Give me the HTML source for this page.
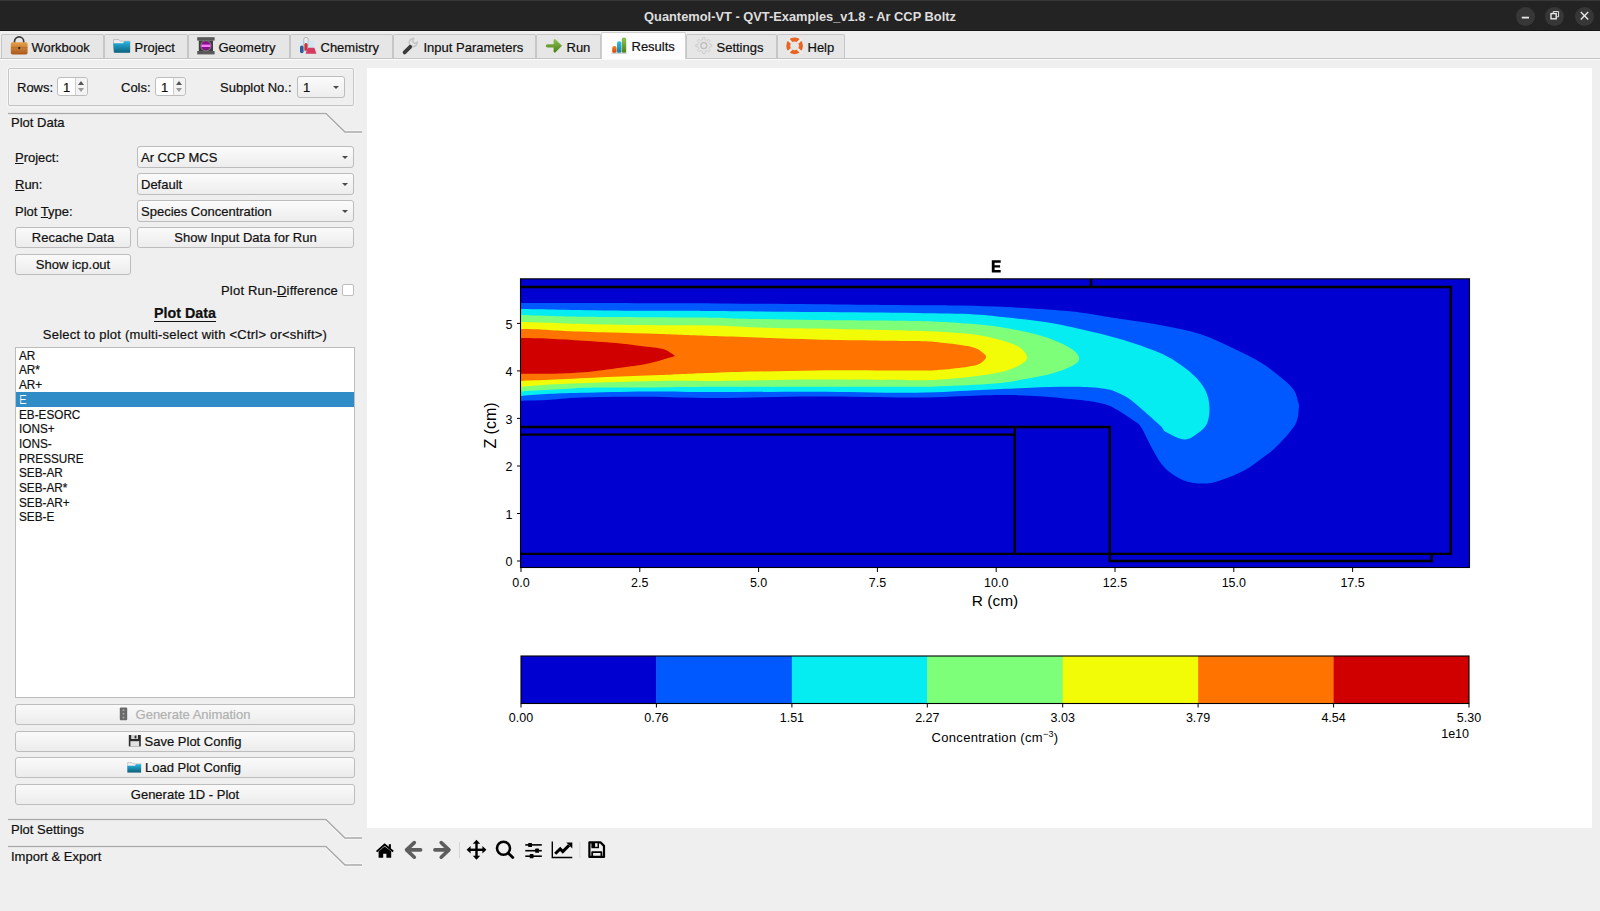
<!DOCTYPE html>
<html><head><meta charset="utf-8">
<style>
*{margin:0;padding:0;box-sizing:border-box}
html,body{width:1600px;height:911px;overflow:hidden;background:#efefef;font-family:"Liberation Sans",sans-serif;font-size:13px;color:#101010;-webkit-text-stroke:0.2px #101010}
.abs{position:absolute}
#title{left:0;top:0;width:1600px;height:31px;background:#232323;border-top:1px solid #383838}
#title .t{-webkit-text-stroke:0;position:absolute;left:0;width:1600px;top:7.5px;text-align:center;color:#dedede;font-weight:bold;font-size:12.85px}
.wb{position:absolute;top:6px;width:19px;height:19px;border-radius:50%;background:#373737}
.tab{position:absolute;top:34px;height:24px;background:#e6e6e6;border:1px solid #c6c6c6;border-bottom:none;border-radius:2px 2px 0 0;white-space:nowrap}
.tab span{position:absolute;top:5px}
.tab svg{position:absolute;top:4px}
.tab.sel{top:32px;height:27px;background:#fcfcfc;border-color:#cfcfcf}
.tab.sel span{top:6px}
.lbl{position:absolute;white-space:nowrap}
.combo{position:absolute;height:22px;background:linear-gradient(#fbfbfb,#ededed);border:1px solid #bcbcbc;border-radius:3px;white-space:nowrap}
.combo span{position:absolute;left:3px;top:3px}
.combo i{position:absolute;right:5.5px;top:8.5px;width:0;height:0;border-left:3.5px solid transparent;border-right:3.5px solid transparent;border-top:3.8px solid #4a4a4a}
.btn{position:absolute;height:21px;background:linear-gradient(#fafafa,#ececec);border:1px solid #bdbdbd;border-radius:3px;text-align:center;white-space:nowrap}
.btn span{position:relative;top:2px}
.btn.dis{color:#b0b0b0;-webkit-text-stroke:0.2px #b0b0b0}
.spin{position:absolute;width:31px;height:19px;background:#fff;border:1px solid #bdbdbd;border-radius:3px}
.spin span{position:absolute;left:5px;top:2px}
.spin .sb{position:absolute;right:0;top:0;width:12px;height:17px;border-left:1px solid #cfcfcf;background:#f3f3f3;border-radius:0 3px 3px 0}
.spin .up{position:absolute;left:2px;top:3px;border-left:3.5px solid transparent;border-right:3.5px solid transparent;border-bottom:4px solid #555}
.spin .dn{position:absolute;left:2px;top:10px;border-left:3.5px solid transparent;border-right:3.5px solid transparent;border-top:4px solid #999}
.li{position:absolute;left:19px;white-space:nowrap;font-size:13.5px;transform:scaleX(0.87);transform-origin:0 0}
</style></head><body>
<div id="title" class="abs"><div class="abs" style="left:0;top:29px;width:1600px;height:1px;background:#161616"></div><div class="t">Quantemol-VT - QVT-Examples_v1.8 - Ar CCP Boltz</div>
<div class="wb" style="left:1516px"></div><div class="wb" style="left:1545px"></div><div class="wb" style="left:1575px"></div>
</div>
<div class="abs" style="left:0;top:58px;width:1600px;height:1px;background:#c4c4c4"></div><div class="abs" style="left:0;top:59px;width:1600px;height:1px;background:#fafafa"></div>
<div class="tab" style="left:1px;width:103px"><span style="left:29.5px">Workbook</span></div>
<div class="tab" style="left:104px;width:84px"><span style="left:29.5px">Project</span></div>
<div class="tab" style="left:188px;width:102px"><span style="left:29.5px">Geometry</span></div>
<div class="tab" style="left:290px;width:103px"><span style="left:29.5px">Chemistry</span></div>
<div class="tab" style="left:393px;width:143px"><span style="left:29.5px">Input Parameters</span></div>
<div class="tab" style="left:536px;width:65px"><span style="left:29.5px">Run</span></div>
<div class="tab sel" style="left:601px;width:85px"><span style="left:29.5px">Results</span></div>
<div class="tab" style="left:686px;width:91px"><span style="left:29.5px">Settings</span></div>
<div class="tab" style="left:777px;width:68px"><span style="left:29.5px">Help</span></div>
<div class="abs" style="left:367px;top:68px;width:1225px;height:760px;background:#fff"></div>

<!-- left panel -->
<div class="abs" style="left:7px;top:67px;width:348px;height:41px;border:1px solid #f6f6f6;border-radius:3px"></div><div class="abs" style="left:8px;top:68px;width:346px;height:38px;border:1px solid #c6c6c6;border-radius:2px;box-shadow:inset 1px 1px 0 #f8f8f8"></div>
<div class="lbl" style="left:17px;top:80px">Rows:</div>
<div class="spin" style="left:57px;top:77px"><span>1</span><div class="sb"><i class="up"></i><i class="dn"></i></div></div>
<div class="lbl" style="left:121px;top:80px">Cols:</div>
<div class="spin" style="left:155px;top:77px"><span>1</span><div class="sb"><i class="up"></i><i class="dn"></i></div></div>
<div class="lbl" style="left:220px;top:80px">Subplot No.:</div>
<div class="combo" style="left:297px;top:76px;width:48px;height:22px"><span style="left:5px">1</span><i></i></div>

<svg class="abs" style="left:0;top:0" width="370" height="911">
<g fill="none" stroke="#fbfbfb" stroke-width="1">
<polyline points="8,112.5 326.5,112.5 345.5,131 362,131"/><polyline points="8,114.5 325.5,114.5 344.5,133 362,133"/>
<polyline points="8,818.5 326.5,818.5 345.5,837 362,837"/><polyline points="8,820.5 325.5,820.5 344.5,839 362,839"/>
<polyline points="8,845.5 326.5,845.5 345.5,864 362,864"/><polyline points="8,847.5 325.5,847.5 344.5,866 362,866"/>
</g>
<g fill="none" stroke="#a9a9a9" stroke-width="1.5">
<polyline points="8,113.5 326,113.5 345,132 362,132"/>
<polyline points="8,819.5 326,819.5 345,838 362,838"/>
<polyline points="8,846.5 326,846.5 345,865 362,865"/>
</g>
</svg>
<div class="lbl" style="left:11px;top:115px">Plot Data</div>
<div class="lbl" style="left:11px;top:822px">Plot Settings</div>
<div class="lbl" style="left:11px;top:849px">Import &amp; Export</div>

<div class="lbl" style="left:15px;top:150px"><u>P</u>roject:</div>
<div class="combo" style="left:137px;top:146px;width:217px"><span>Ar CCP MCS</span><i></i></div>
<div class="lbl" style="left:15px;top:177px"><u>R</u>un:</div>
<div class="combo" style="left:137px;top:173px;width:217px"><span>Default</span><i></i></div>
<div class="lbl" style="left:15px;top:204px">Plot <u>T</u>ype:</div>
<div class="combo" style="left:137px;top:200px;width:217px"><span>Species Concentration</span><i></i></div>
<div class="btn" style="left:15px;top:227px;width:116px"><span>Recache Data</span></div>
<div class="btn" style="left:137px;top:227px;width:217px"><span>Show Input Data for Run</span></div>
<div class="btn" style="left:15px;top:254px;width:116px"><span>Show icp.out</span></div>
<div class="lbl" style="left:221px;top:283px;letter-spacing:0.2px">Plot Run-<u>D</u>ifference</div>
<div class="abs" style="left:342px;top:284px;width:12px;height:12px;background:#fff;border:1px solid #bdbdbd;border-radius:2px"></div>
<div class="lbl" style="left:0;width:370px;text-align:center;top:305px;font-weight:bold;font-size:14.3px"><u style="text-underline-offset:2.5px">Plot Data</u></div>
<div class="lbl" style="left:0;width:370px;text-align:center;top:327px;letter-spacing:0.22px">Select to plot (multi-select with &lt;Ctrl&gt; or&lt;shift&gt;)</div>

<div class="abs" style="left:15px;top:347px;width:340px;height:351px;background:#fff;border:1px solid #bcbcbc"></div>
<div class="abs" style="left:16px;top:392px;width:338px;height:14.5px;background:#308cc6"></div>
<div class="list">
<div class="li" style="top:347.80px">AR</div>
<div class="li" style="top:362.48px">AR*</div>
<div class="li" style="top:377.16px">AR+</div>
<div class="li" style="color:#fff;top:391.84px">E</div>
<div class="li" style="top:406.52px">EB-ESORC</div>
<div class="li" style="top:421.20px">IONS+</div>
<div class="li" style="top:435.88px">IONS-</div>
<div class="li" style="top:450.56px">PRESSURE</div>
<div class="li" style="top:465.24px">SEB-AR</div>
<div class="li" style="top:479.92px">SEB-AR*</div>
<div class="li" style="top:494.60px">SEB-AR+</div>
<div class="li" style="top:509.28px">SEB-E</div>
</div>
<div class="btn dis" style="left:15px;top:704px;width:340px"><span style="left:8px">Generate Animation</span></div>
<div class="btn" style="left:15px;top:731px;width:340px"><span style="left:8px">Save Plot Config</span></div>
<div class="btn" style="left:15px;top:757px;width:340px"><span style="left:8px">Load Plot Config</span></div>
<div class="btn" style="left:15px;top:784px;width:340px"><span>Generate 1D - Plot</span></div>
<svg class="abs" style="left:0;top:0" width="1600" height="911" font-family="Liberation Sans" >
<rect x="521" y="279" width="948" height="288" fill="#0000d1"/>
<path fill="#0059ff" d="M521.00,302.90 C530.83,302.92 547.67,302.92 580.00,303.00 C612.33,303.08 675.83,303.20 715.00,303.40 C754.17,303.60 781.67,303.90 815.00,304.20 C848.33,304.50 890.67,304.98 915.00,305.20 C939.33,305.42 945.67,305.18 961.00,305.50 C976.33,305.82 992.67,306.42 1007.00,307.10 C1021.33,307.78 1034.83,308.70 1047.00,309.60 C1059.17,310.50 1067.83,310.97 1080.00,312.50 C1092.17,314.03 1106.67,316.72 1120.00,318.80 C1133.33,320.88 1146.67,322.47 1160.00,325.00 C1173.33,327.53 1187.73,330.08 1200.00,334.00 C1212.27,337.92 1223.62,343.83 1233.60,348.50 C1243.58,353.17 1252.22,357.33 1259.90,362.00 C1267.58,366.67 1274.10,371.92 1279.70,376.50 C1285.30,381.08 1290.43,385.25 1293.50,389.50 C1296.57,393.75 1297.22,398.92 1298.10,402.00 C1298.98,405.08 1299.27,404.27 1298.80,408.00 C1298.33,411.73 1298.77,418.23 1295.30,424.40 C1291.83,430.57 1283.05,439.73 1278.00,445.00 C1272.95,450.27 1270.50,451.83 1265.00,456.00 C1259.50,460.17 1252.50,465.92 1245.00,470.00 C1237.50,474.08 1227.00,478.23 1220.00,480.50 C1213.00,482.77 1209.00,483.60 1203.00,483.60 C1197.00,483.60 1190.33,483.10 1184.00,480.50 C1177.67,477.90 1170.17,473.08 1165.00,468.00 C1159.83,462.92 1156.95,456.75 1153.00,450.00 C1149.05,443.25 1144.40,432.33 1141.30,427.50 C1138.20,422.67 1138.98,424.27 1134.40,421.00 C1129.82,417.73 1119.53,410.88 1113.80,407.90 C1108.07,404.92 1104.58,404.30 1100.00,403.10 C1095.42,401.90 1095.17,401.77 1086.30,400.70 C1077.43,399.63 1058.88,397.63 1046.80,396.70 C1034.72,395.77 1024.78,395.32 1013.80,395.10 C1002.82,394.88 997.37,395.02 980.90,395.40 C964.43,395.78 942.65,397.22 915.00,397.40 C887.35,397.58 848.33,396.40 815.00,396.50 C781.67,396.60 743.03,397.97 715.00,398.00 C686.97,398.03 669.15,396.80 646.80,396.70 C624.45,396.60 597.60,396.85 580.90,397.40 C564.20,397.95 556.58,399.45 546.60,400.00 C536.62,400.55 525.27,400.58 521.00,400.70 L521.00,302.90Z"/>
<path fill="#06edf1" d="M521.00,309.10 C525.50,309.17 534.33,309.28 548.00,309.50 C561.67,309.72 580.00,310.18 603.00,310.40 C626.00,310.62 667.33,310.68 686.00,310.80 C704.67,310.92 693.50,310.88 715.00,311.10 C736.50,311.32 781.67,311.77 815.00,312.10 C848.33,312.43 888.45,312.72 915.00,313.10 C941.55,313.48 958.93,313.67 974.30,314.40 C989.67,315.13 995.12,316.20 1007.20,317.50 C1019.28,318.80 1034.67,320.28 1046.80,322.20 C1058.93,324.12 1067.80,326.20 1080.00,329.00 C1092.20,331.80 1106.67,335.00 1120.00,339.00 C1133.33,343.00 1149.85,348.65 1160.00,353.00 C1170.15,357.35 1174.78,360.88 1180.90,365.10 C1187.02,369.32 1192.53,373.92 1196.70,378.30 C1200.87,382.68 1203.78,386.70 1205.90,391.40 C1208.02,396.10 1209.17,401.23 1209.40,406.50 C1209.63,411.77 1209.20,418.58 1207.30,423.00 C1205.40,427.42 1201.80,430.25 1198.00,433.00 C1194.20,435.75 1189.83,439.67 1184.50,439.50 C1179.17,439.33 1170.00,434.28 1166.00,432.00 C1162.00,429.72 1164.38,429.47 1160.50,425.80 C1156.62,422.13 1148.08,414.63 1142.70,410.00 C1137.32,405.37 1132.82,401.10 1128.20,398.00 C1123.58,394.90 1118.70,392.88 1115.00,391.40 C1111.30,389.92 1109.68,389.75 1106.00,389.10 C1102.32,388.45 1100.58,387.88 1092.90,387.50 C1085.22,387.12 1071.98,386.68 1059.90,386.80 C1047.82,386.92 1033.57,387.65 1020.40,388.20 C1007.23,388.75 998.47,389.33 980.90,390.10 C963.33,390.87 942.65,392.53 915.00,392.80 C887.35,393.07 848.33,391.82 815.00,391.70 C781.67,391.58 743.03,392.15 715.00,392.10 C686.97,392.05 669.15,391.28 646.80,391.40 C624.45,391.52 597.60,392.35 580.90,392.80 C564.20,393.25 556.58,393.57 546.60,394.10 C536.62,394.63 525.27,395.68 521.00,396.00 L521.00,309.10Z"/>
<path fill="#7dff7a" d="M521.00,315.00 C529.00,315.25 553.67,316.17 569.00,316.50 C584.33,316.83 588.67,316.80 613.00,317.00 C637.33,317.20 695.00,317.45 715.00,317.70 C735.00,317.95 716.33,318.12 733.00,318.50 C749.67,318.88 784.67,319.58 815.00,320.00 C845.33,320.42 889.55,320.40 915.00,321.00 C940.45,321.60 952.33,322.40 967.70,323.60 C983.07,324.80 995.12,326.22 1007.20,328.20 C1019.28,330.18 1031.42,333.08 1040.20,335.50 C1048.98,337.92 1054.42,340.28 1059.90,342.70 C1065.38,345.12 1069.92,347.58 1073.10,350.00 C1076.28,352.42 1078.57,354.90 1079.00,357.20 C1079.43,359.50 1078.88,361.50 1075.70,363.80 C1072.52,366.10 1066.92,368.70 1059.90,371.00 C1052.88,373.30 1044.58,375.52 1033.60,377.60 C1022.62,379.68 1009.37,382.07 994.00,383.50 C978.63,384.93 954.57,385.65 941.40,386.20 C928.23,386.75 936.07,386.70 915.00,386.80 C893.93,386.90 848.33,386.80 815.00,386.80 C781.67,386.80 743.03,386.68 715.00,386.80 C686.97,386.92 666.97,387.38 646.80,387.50 C626.63,387.62 609.38,387.17 594.00,387.50 C578.62,387.83 566.67,388.85 554.50,389.50 C542.33,390.15 526.58,391.08 521.00,391.40 L521.00,315.00Z"/>
<path fill="#f1fc06" d="M521.00,322.00 C524.33,322.08 530.33,322.17 541.00,322.50 C551.67,322.83 568.50,323.58 585.00,324.00 C601.50,324.42 618.33,324.73 640.00,325.00 C661.67,325.27 695.50,325.18 715.00,325.60 C734.50,326.02 740.33,327.02 757.00,327.50 C773.67,327.98 788.67,327.95 815.00,328.50 C841.33,329.05 891.75,330.08 915.00,330.80 C938.25,331.52 943.52,332.02 954.50,332.80 C965.48,333.58 972.12,333.97 980.90,335.50 C989.68,337.03 1000.62,339.92 1007.20,342.00 C1013.78,344.08 1017.10,345.58 1020.40,348.00 C1023.70,350.42 1026.57,353.98 1027.00,356.50 C1027.43,359.02 1026.30,360.78 1023.00,363.10 C1019.70,365.42 1014.22,368.32 1007.20,370.40 C1000.18,372.48 990.78,374.18 980.90,375.60 C971.02,377.02 958.88,378.13 947.90,378.90 C936.92,379.67 937.15,380.08 915.00,380.20 C892.85,380.32 848.33,379.48 815.00,379.60 C781.67,379.72 740.83,380.68 715.00,380.90 C689.17,381.12 677.97,380.68 660.00,380.90 C642.03,381.12 624.78,381.65 607.20,382.20 C589.62,382.75 568.87,383.43 554.50,384.20 C540.13,384.97 526.58,386.37 521.00,386.80 L521.00,322.00Z"/>
<path fill="#ff7300" d="M521.00,329.10 C524.33,329.17 533.67,329.18 541.00,329.50 C548.33,329.82 553.50,330.50 565.00,331.00 C576.50,331.50 594.17,332.00 610.00,332.50 C625.83,333.00 642.50,333.40 660.00,334.00 C677.50,334.60 689.17,335.20 715.00,336.10 C740.83,337.00 781.67,338.57 815.00,339.40 C848.33,340.23 893.93,340.55 915.00,341.10 C936.07,341.65 932.62,341.88 941.40,342.70 C950.18,343.52 961.57,344.90 967.70,346.00 C973.83,347.10 976.45,348.75 978.20,349.30 C979.52,350.50 985.87,354.08 986.10,356.50 C986.33,358.92 982.67,362.10 979.60,363.80 C976.53,365.50 974.07,365.72 967.70,366.70 C961.33,367.68 950.18,369.05 941.40,369.70 C932.62,370.35 936.07,370.48 915.00,370.60 C893.93,370.72 848.33,370.05 815.00,370.40 C781.67,370.75 740.83,371.93 715.00,372.70 C689.17,373.47 677.97,374.28 660.00,375.00 C642.03,375.72 624.78,376.23 607.20,377.00 C589.62,377.77 568.87,378.95 554.50,379.60 C540.13,380.25 526.58,380.68 521.00,380.90 L521.00,329.10Z"/>
<path fill="#d10000" d="M521.00,338.10 C525.82,338.20 539.48,338.27 549.90,338.70 C560.32,339.13 571.75,339.92 583.50,340.70 C595.25,341.48 609.85,342.40 620.40,343.40 C630.95,344.40 639.55,345.72 646.80,346.70 C654.05,347.68 659.20,347.77 663.90,349.30 C668.60,350.83 673.15,354.80 675.00,355.90 C670.30,357.22 655.90,361.83 646.80,363.80 C637.70,365.77 630.95,366.28 620.40,367.70 C609.85,369.12 594.48,371.30 583.50,372.30 C572.52,373.30 564.92,373.47 554.50,373.70 C544.08,373.93 526.58,373.70 521.00,373.70 L521.00,338.10Z"/>
<g fill="none" stroke="#000" stroke-width="2.4" stroke-linejoin="miter">
<polyline points="521,287 1450.8,287 1450.8,553.9 521,553.9"/>
<polyline points="1091,279 1091,287"/>
<polyline points="521,427 1109.8,427 1109.8,561 1431.7,561 1431.7,553.9"/>
<polyline points="521,434.6 1014.8,434.6"/><polyline points="1014.8,427 1014.8,553.9"/>
</g>
<rect x="520.5" y="278.8" width="949" height="288.7" fill="none" stroke="#000" stroke-width="1.1"/>
<g stroke="#000" stroke-width="1"><line x1="517" y1="561.0" x2="521" y2="561.0"/><line x1="517" y1="513.5" x2="521" y2="513.5"/><line x1="517" y1="466.0" x2="521" y2="466.0"/><line x1="517" y1="418.4" x2="521" y2="418.4"/><line x1="517" y1="370.9" x2="521" y2="370.9"/><line x1="517" y1="323.4" x2="521" y2="323.4"/><line x1="521.0" y1="567.5" x2="521.0" y2="572"/><line x1="639.8" y1="567.5" x2="639.8" y2="572"/><line x1="758.6" y1="567.5" x2="758.6" y2="572"/><line x1="877.4" y1="567.5" x2="877.4" y2="572"/><line x1="996.2" y1="567.5" x2="996.2" y2="572"/><line x1="1115.0" y1="567.5" x2="1115.0" y2="572"/><line x1="1233.8" y1="567.5" x2="1233.8" y2="572"/><line x1="1352.6" y1="567.5" x2="1352.6" y2="572"/></g>
<g font-size="12.5" fill="#000"><text x="512.5" y="566.2" text-anchor="end">0</text><text x="512.5" y="518.7" text-anchor="end">1</text><text x="512.5" y="471.2" text-anchor="end">2</text><text x="512.5" y="423.6" text-anchor="end">3</text><text x="512.5" y="376.1" text-anchor="end">4</text><text x="512.5" y="328.6" text-anchor="end">5</text><text x="521.0" y="586.5" text-anchor="middle">0.0</text><text x="639.8" y="586.5" text-anchor="middle">2.5</text><text x="758.6" y="586.5" text-anchor="middle">5.0</text><text x="877.4" y="586.5" text-anchor="middle">7.5</text><text x="996.2" y="586.5" text-anchor="middle">10.0</text><text x="1115.0" y="586.5" text-anchor="middle">12.5</text><text x="1233.8" y="586.5" text-anchor="middle">15.0</text><text x="1352.6" y="586.5" text-anchor="middle">17.5</text></g>
<text x="995" y="601+0" font-size="14" text-anchor="middle" fill="#000" transform="translate(0,0)"></text>
<text x="995" y="606.4" font-size="15.5" text-anchor="middle" fill="#000">R (cm)</text>
<text x="0" y="0" font-size="16" text-anchor="middle" fill="#000" transform="translate(495.8,425.5) rotate(-90)">Z (cm)</text>
<path fill="#000" d="M991.8,260.2 h8.9 v2.6 h-6.1 v2.4 h5.5 v2.4 h-5.5 v2.4 h6.1 v2.6 h-8.9z"/>
<rect x="521.00" y="656" width="135.73" height="47.5" fill="#0000d1"/>
<rect x="656.43" y="656" width="135.73" height="47.5" fill="#0059ff"/>
<rect x="791.86" y="656" width="135.73" height="47.5" fill="#06edf1"/>
<rect x="927.29" y="656" width="135.73" height="47.5" fill="#7dff7a"/>
<rect x="1062.71" y="656" width="135.73" height="47.5" fill="#f1fc06"/>
<rect x="1198.14" y="656" width="135.73" height="47.5" fill="#ff7300"/>
<rect x="1333.57" y="656" width="135.43" height="47.5" fill="#d10000"/>
<rect x="521" y="656" width="948" height="47.5" fill="none" stroke="#000" stroke-width="1.1"/>
<g stroke="#000" stroke-width="1"><line x1="521.0" y1="703.5" x2="521.0" y2="707.5"/><line x1="656.4" y1="703.5" x2="656.4" y2="707.5"/><line x1="791.9" y1="703.5" x2="791.9" y2="707.5"/><line x1="927.3" y1="703.5" x2="927.3" y2="707.5"/><line x1="1062.7" y1="703.5" x2="1062.7" y2="707.5"/><line x1="1198.1" y1="703.5" x2="1198.1" y2="707.5"/><line x1="1333.6" y1="703.5" x2="1333.6" y2="707.5"/><line x1="1469.0" y1="703.5" x2="1469.0" y2="707.5"/></g>
<g font-size="12.5" fill="#000"><text x="521.0" y="722" text-anchor="middle">0.00</text><text x="656.4" y="722" text-anchor="middle">0.76</text><text x="791.9" y="722" text-anchor="middle">1.51</text><text x="927.3" y="722" text-anchor="middle">2.27</text><text x="1062.7" y="722" text-anchor="middle">3.03</text><text x="1198.1" y="722" text-anchor="middle">3.79</text><text x="1333.6" y="722" text-anchor="middle">4.54</text><text x="1469.0" y="722" text-anchor="middle">5.30</text></g>
<text x="995" y="742" font-size="13" letter-spacing="0.3" text-anchor="middle" fill="#000">Concentration (cm<tspan dy="-5" font-size="9">−3</tspan><tspan dy="5">)</tspan></text>
<text x="1469" y="738" font-size="12.5" text-anchor="end" fill="#000">1e10</text>
</svg><svg class="abs" style="left:0;top:0" width="1600" height="911">
<defs>
<linearGradient id="gBrief" x1="0" y1="0" x2="0" y2="1"><stop offset="0" stop-color="#e9a24a"/><stop offset="1" stop-color="#a9581c"/></linearGradient>
<linearGradient id="gFold" x1="0" y1="0" x2="0" y2="1"><stop offset="0" stop-color="#27b6e3"/><stop offset="1" stop-color="#0c5f7c"/></linearGradient>
<linearGradient id="gGreen" x1="0" y1="0" x2="0" y2="1"><stop offset="0" stop-color="#8cc152"/><stop offset="1" stop-color="#4a8012"/></linearGradient>
<linearGradient id="gOr" x1="0" y1="0" x2="0" y2="1"><stop offset="0" stop-color="#f5841f"/><stop offset="1" stop-color="#d43d0a"/></linearGradient>
<linearGradient id="gBl" x1="0" y1="0" x2="0" y2="1"><stop offset="0" stop-color="#2fc0ea"/><stop offset="1" stop-color="#127ca4"/></linearGradient>
<linearGradient id="gGr2" x1="0" y1="0" x2="0" y2="1"><stop offset="0" stop-color="#8ec652"/><stop offset="1" stop-color="#4b7f14"/></linearGradient>
</defs>
<!-- window buttons -->
<g stroke="#e8e8e8" fill="none" stroke-width="1.4">
<line x1="1521.8" y1="17.6" x2="1529" y2="17.6" stroke-width="1.8"/>
<rect x="1551" y="13.6" width="5.2" height="5.2" stroke-width="1.4"/>
<polyline points="1553.2,13.6 1553.2,11.6 1558.6,11.6 1558.6,16.8 1556.2,16.8" stroke-width="1"/>
<line x1="1580.8" y1="12" x2="1588.2" y2="19.4"/><line x1="1588.2" y1="12" x2="1580.8" y2="19.4"/>
</g>
<!-- briefcase -->
<path d="M14.5,43 v-1.5 a4.6,4.6 0 0 1 9.2,0 v1.5" fill="none" stroke="#3a3a3a" stroke-width="1.7"/>
<rect x="10.8" y="42.2" width="16.8" height="12.2" rx="1.6" fill="url(#gBrief)"/>
<line x1="11" y1="47.6" x2="27.4" y2="47.6" stroke="#b86a26" stroke-width="0.8"/>
<circle cx="19.2" cy="48" r="1.2" fill="#333"/>
<!-- folder project -->
<path d="M113.6,52 v-12.4 h5.4 l1.4,1.6 h9.6 v10.8z" fill="#efefef" stroke="#b9b9b9" stroke-width="0.9"/>
<path d="M114.2,52.8 h15.8 v-10.6 a1,1 0 0 0 -1,-1 h-4.6 l-1.4,2.1 h-8.8 a1,1 0 0 0 -1,1z" fill="url(#gFold)"/>
<!-- geometry -->
<rect x="197.2" y="37.2" width="17.4" height="3.4" fill="#585858"/>
<rect x="197.2" y="51" width="17.4" height="3.4" fill="#585858"/>
<rect x="198.8" y="40.6" width="14.2" height="10.4" fill="#3c3c3c"/>
<circle cx="205.9" cy="45.8" r="5.6" fill="#777" />
<circle cx="205.9" cy="45.8" r="4.6" fill="#8a108a"/>
<rect x="201.4" y="44.6" width="9" height="2.4" fill="#ff7bff"/>
<!-- chemistry -->
<rect x="299.6" y="40.5" width="4.6" height="12.8" rx="2" fill="#d6ecf8"/>
<rect x="300.0" y="45.5" width="3.6" height="7.8" rx="1.8" fill="#2b5c9e"/>
<rect x="303.8" y="37.4" width="4.4" height="13.6" rx="2" fill="#e6f2f8" stroke="#9a7070" stroke-width="0.5"/>
<rect x="304.4" y="43" width="3.2" height="7.8" rx="1.6" fill="#c93434"/>
<path d="M308.6,41 h5 v5 l2.8,7.8 h-10.8 l3,-7.8z" fill="#cfe7f5"/>
<path d="M307.8,47.8 h6.6 l2,6 h-10.8z" fill="#d63a62"/>
<!-- wrench -->
<path d="M413.6,38.6 a4,4 0 1 0 3.6,3.6 l-2.6,1.4 -2,-2z" fill="none" stroke="#c6c6c6" stroke-width="1.6"/>
<line x1="404.6" y1="52.4" x2="410.2" y2="46.8" stroke="#3a3a3a" stroke-width="3.8" stroke-linecap="round"/>
<!-- run arrow -->
<path d="M547.4,44.2 h6.2 v-4 a1.2,1.2 0 0 1 2,-0.8 l6.4,6.4 l-6.4,6.4 a1.2,1.2 0 0 1 -2,-0.8 v-4 h-6.2 a1.6,1.6 0 0 1 0,-3.2z" fill="url(#gGreen)"/>
<!-- results bars -->
<rect x="612.2" y="46" width="4.4" height="7.4" rx="2" fill="url(#gOr)"/>
<rect x="617" y="41.2" width="4.4" height="12.2" rx="2" fill="url(#gBl)"/>
<rect x="621.8" y="37.4" width="4.4" height="16" rx="2" fill="url(#gGr2)"/>
<rect x="611.4" y="52.6" width="15.4" height="1.4" fill="#cfd3d6"/>
<!-- gear -->
<g transform="translate(703.8,45.6)">
<path id="gearp" d="M-2.29,-5.55 L-1.31,-5.86 L-1.06,-7.93 L1.06,-7.93 L1.31,-5.86 L2.30,-5.54 L3.21,-5.07 L4.85,-6.36 L6.36,-4.85 L5.07,-3.21 L5.55,-2.29 L5.86,-1.31 L7.93,-1.06 L7.93,1.06 L5.86,1.31 L5.54,2.30 L5.07,3.21 L6.36,4.85 L4.85,6.36 L3.21,5.07 L2.29,5.55 L1.31,5.86 L1.06,7.93 L-1.06,7.93 L-1.31,5.86 L-2.30,5.54 L-3.21,5.07 L-4.85,6.36 L-6.36,4.85 L-5.07,3.21 L-5.55,2.29 L-5.86,1.31 L-7.93,1.06 L-7.93,-1.06 L-5.86,-1.31 L-5.54,-2.30 L-5.07,-3.21 L-6.36,-4.85 L-4.85,-6.36 L-3.21,-5.07Z" fill="#e4e4e4" stroke="#c8c8c8" stroke-width="0.8"/>
<circle r="3" fill="none" stroke="#bdbdbd" stroke-width="1.3"/>
</g>
<!-- lifebuoy -->
<g transform="translate(794.6,45.8)">
<circle r="6.4" fill="none" stroke="#e86420" stroke-width="4"/>
<g stroke="#ececec" stroke-width="2.6"><line x1="-3" y1="-3" x2="-7" y2="-7"/><line x1="3" y1="-3" x2="7" y2="-7"/><line x1="-3" y1="3" x2="-7" y2="7"/><line x1="3" y1="3" x2="7" y2="7"/></g>
</g>
<!-- toolbar -->
<g fill="#000">
<path d="M376.6,851.6 L384.6,844.6 L393.2,851.6" fill="none" stroke="#000" stroke-width="1.9"/>
<rect x="388.8" y="844.2" width="2.1" height="4.2"/>
<path d="M378.6,851.2 L384.6,846.4 L391.2,851.2 V857.8 H386.4 V853.8 H383.2 V857.8 H378.6z"/>
</g>
<g fill="none" stroke="#5e5e5e" stroke-width="3.6" stroke-linecap="round" stroke-linejoin="round">
<polyline points="414.3,842.6 406.6,849.9 414.3,857.2"/><line x1="407" y1="849.9" x2="420.6" y2="849.9"/>
<polyline points="441.2,842.6 448.9,849.9 441.2,857.2"/><line x1="448.5" y1="849.9" x2="434.9" y2="849.9"/>
</g>
<line x1="459.5" y1="842" x2="459.5" y2="858" stroke="#d6d6d6" stroke-width="1"/>
<line x1="579.9" y1="842" x2="579.9" y2="858" stroke="#d6d6d6" stroke-width="1"/>
<g fill="#000">
<rect x="475.3" y="843" width="2.4" height="14"/><rect x="469.5" y="848.6" width="14" height="2.4"/>
<path d="M476.5,839.8 L480.2,843.8 H472.8z M476.5,859.8 L480.2,855.8 H472.8z M466.6,849.8 L470.6,846.1 V853.5z M486.4,849.8 L482.4,846.1 V853.5z"/>
</g>
<circle cx="503.5" cy="848.3" r="6.5" fill="none" stroke="#000" stroke-width="2.6"/>
<line x1="508.6" y1="853.4" x2="512.8" y2="857.6" stroke="#000" stroke-width="2.8" stroke-linecap="round"/>
<g stroke="#000" stroke-width="1.6">
<line x1="525.3" y1="844.9" x2="541.8" y2="844.9"/><line x1="525.3" y1="850.7" x2="541.8" y2="850.7"/><line x1="525.3" y1="856.2" x2="541.8" y2="856.2"/>
</g>
<g fill="#000"><rect x="528.2" y="842.9" width="3.8" height="4.2" rx="0.6"/><rect x="535.2" y="848.6" width="3.8" height="4.2" rx="0.6"/><rect x="529.7" y="854.1" width="3.8" height="4.2" rx="0.6"/></g>
<path d="M552.3,841.5 V857.5 H572.3" fill="none" stroke="#000" stroke-width="1.4"/>
<polyline points="555.2,853.8 560.2,848.9 562.8,851.6 569,845.4" fill="none" stroke="#000" stroke-width="3"/>
<path d="M572.3,842.6 L572.3,848.6 L566.3,842.6z" fill="#000"/>
<g fill="none" stroke="#000" stroke-width="2.2" stroke-linejoin="round">
<path d="M589.4,842.3 H600.4 L604,845.9 V856.9 H589.4z"/>
<rect x="592.2" y="852.2" width="9.2" height="4.7" stroke-width="1.8"/>
</g>
<rect x="591.4" y="842.2" width="7.6" height="6" fill="#000"/>
<rect x="595.1" y="843.2" width="2.4" height="3.6" fill="#efefef"/>
<!-- button icons -->
<rect x="119.8" y="707.4" width="7.4" height="12.8" rx="1" fill="#6a6a6a"/>
<g fill="#aaa"><circle cx="123.5" cy="710.2" r="1"/><circle cx="123.5" cy="713.8" r="1"/><circle cx="123.5" cy="717.4" r="1"/></g>
<path d="M128.8,735 H140.8 V746.4 H128.8z" fill="#2e2e2e"/>
<rect x="131.2" y="735" width="6.8" height="4" fill="#d8d8d8"/><rect x="134.6" y="735.6" width="1.8" height="2.8" fill="#2e2e2e"/>
<rect x="130.4" y="741.2" width="8.8" height="5.2" fill="#e2e2e2"/>
<path d="M127.6,772.2 v-9.6 h4.4 l1,1.2 h8 v8.4z" fill="#efefef" stroke="#bbb" stroke-width="0.7"/>
<path d="M127.4,772.4 h13.6 v-8.2 h-5 l-1,1.6 h-7.6z" fill="url(#gFold)"/>
</svg>

</body></html>
